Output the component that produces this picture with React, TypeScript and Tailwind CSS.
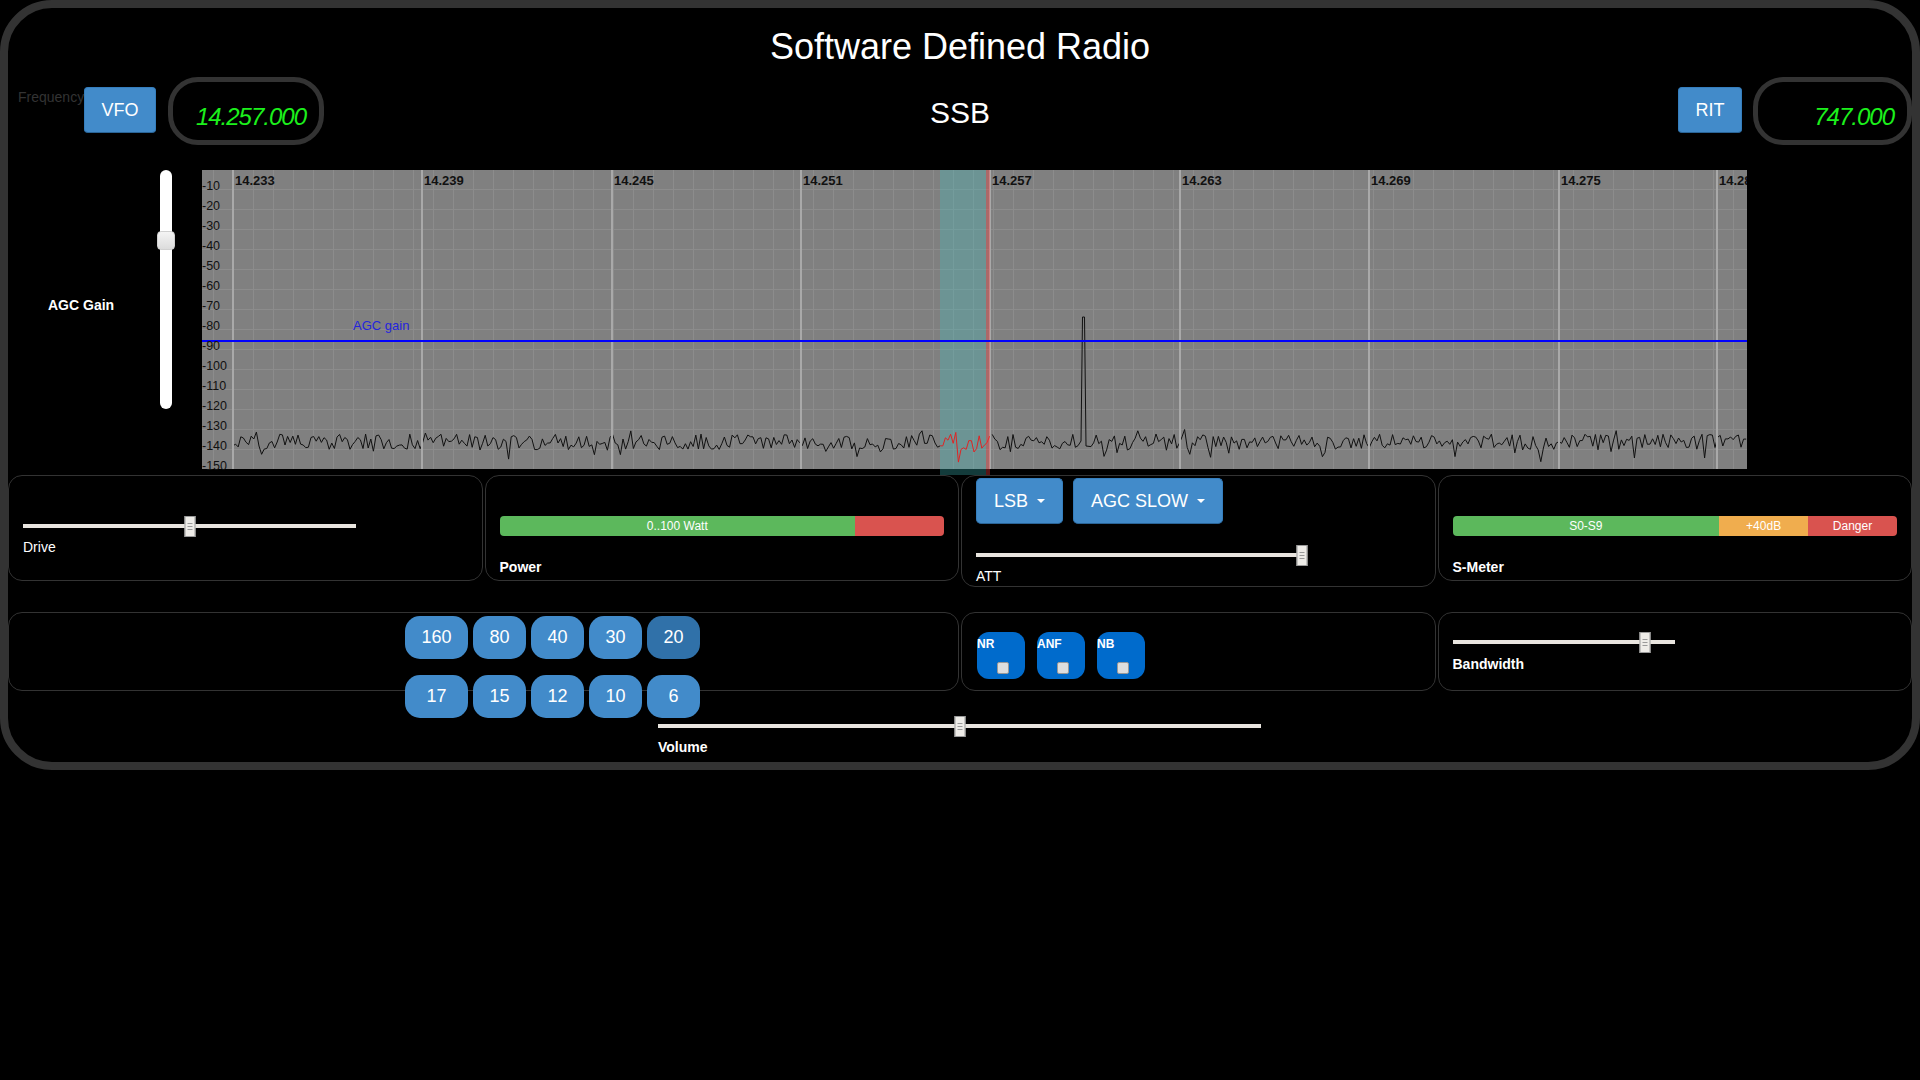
import React from "react";

const MAJORS = [31, 220, 410, 599, 788, 978, 1167, 1357, 1515];
const FREQS = ["14.233", "14.239", "14.245", "14.251", "14.257", "14.263", "14.269", "14.275", "14.281"];
const DB = [-10, -20, -30, -40, -50, -60, -70, -80, -90, -100, -110, -120, -130, -140, -150];

const SW = 1545;
const SH = 299;
const PB_LEFT = 738;
const PB_RIGHT = 789;

function makeTrace() {
  let s = 987654;
  const rnd = () => {
    s = (s * 16807) % 2147483647;
    return s / 2147483647;
  };
  const pts: [number, number][] = [];
  let spikeDone = false;
  for (let i = 0; i < 600; i++) {
    const x = 31 + i * 2.6;
    if (x > SW) break;
    if (x > 876 && x < 887) {
      if (!spikeDone) {
        pts.push([879, 271], [880.5, 147], [882.5, 147], [884, 276]);
        spikeDone = true;
      }
      continue;
    }
    let y = 272 + (rnd() - 0.5) * 16;
    if (rnd() < 0.07) y += 5 + rnd() * 8;
    if (rnd() < 0.05) y -= 4 + rnd() * 5;
    pts.push([x, y]);
  }
  return pts;
}

const TRACE = makeTrace();
const toPoints = (pts: [number, number][]) => pts.map(([x, y]) => `${x.toFixed(1)},${y.toFixed(1)}`).join(" ");
const BLACK_A = TRACE.filter(([x]) => x <= PB_LEFT + 1);
const RED = TRACE.filter(([x]) => x >= PB_LEFT - 1 && x <= PB_RIGHT + 1);
const BLACK_B = TRACE.filter(([x]) => x >= PB_RIGHT - 1);

function Spectrum() {
  const minorX: number[] = [];
  for (let x = 11; x < SW; x += 20) minorX.push(x);
  const minorY: number[] = [];
  for (let y = 19; y < SH; y += 20) minorY.push(y);

  return (
    <svg width={SW} height={305} className="block shrink-0">
      <rect x={0} y={0} width={SW} height={SH} fill="#808080" />
      {minorX.map((x) => (
        <line key={"mx" + x} x1={x + 0.5} y1={0} x2={x + 0.5} y2={SH} stroke="#8c8c8c" strokeWidth={1} />
      ))}
      {minorY.map((y) => (
        <line key={"my" + y} x1={0} y1={y + 0.5} x2={SW} y2={y + 0.5} stroke="#8c8c8c" strokeWidth={1} />
      ))}
      <polyline points={toPoints(BLACK_A)} fill="none" stroke="#111" strokeWidth={1} />
      <polyline points={toPoints(BLACK_B)} fill="none" stroke="#111" strokeWidth={1} />
      {MAJORS.map((x) => (
        <line key={"M" + x} x1={x} y1={0} x2={x} y2={SH} stroke="#a9a9a9" strokeWidth={2} />
      ))}
      <rect x={PB_LEFT} y={0} width={PB_RIGHT - PB_LEFT - 5} height={305} fill="#3ec4c4" opacity={0.3} />
      <polyline points={toPoints(RED)} fill="none" stroke="#e02424" strokeWidth={1} />
      <rect x={784} y={0} width={4} height={305} fill="#ff3c3c" opacity={0.35} />
      <line x1={0} y1={171} x2={SW} y2={171} stroke="#0000ff" strokeWidth={2} />
      <text x={151} y={160} fill="#2424dd" fontSize={13} fontFamily="Liberation Sans, Arial, sans-serif">
        AGC gain
      </text>
      {FREQS.map((f, i) => (
        <text
          key={f}
          x={MAJORS[i] + 2}
          y={15}
          fill="#111"
          fontSize={13}
          fontWeight="bold"
          fontFamily="Liberation Sans, Arial, sans-serif"
        >
          {f}
        </text>
      ))}
      {DB.map((d, i) => (
        <text key={d} x={0} y={19.5 + i * 20} fill="#111" fontSize={12.5} fontFamily="Liberation Sans, Arial, sans-serif">
          {d}
        </text>
      ))}
    </svg>
  );
}

function HSlider({ className, pos }: { className: string; pos: number }) {
  return (
    <div className={"relative h-[21px] " + className}>
      <div className="absolute left-0 right-0 top-[8px] h-[4px] bg-[#e9e5df]" />
      <div
        className="absolute top-0 flex h-[21px] w-[11px] -translate-x-1/2 flex-col items-center justify-center gap-[2px] border border-[#9a9a9a] bg-[#eeece8]"
        style={{ left: `${pos}%` }}
      >
        <span className="block h-px w-[5px] bg-[#9a9a9a]" />
        <span className="block h-px w-[5px] bg-[#9a9a9a]" />
        <span className="block h-px w-[5px] bg-[#9a9a9a]" />
      </div>
    </div>
  );
}

function Display({ value, wide }: { value: string; wide?: boolean }) {
  return (
    <div
      className={
        "flex h-[68px] items-start justify-end rounded-[30px] border-[5px] border-[#333] pr-[13px] pt-[21px] " +
        (wide ? "w-[159px]" : "w-[156px]")
      }
    >
      <span className="text-[24px] leading-[28px] italic tracking-[-1px] text-[#1cf01c]">{value}</span>
    </div>
  );
}

function BlueButton({ children, className }: { children: React.ReactNode; className: string }) {
  return (
    <button
      className={
        "flex items-center justify-center rounded-[4px] border border-[#357ebd] border-b-[#2a6496] bg-[#428bca] text-[18px] text-white " +
        className
      }
    >
      {children}
    </button>
  );
}

function Caret() {
  return <span className="ml-[9px] inline-block h-0 w-0 border-x-[4px] border-t-[4px] border-x-transparent border-t-white" />;
}

function Panel({ children, className }: { children: React.ReactNode; className: string }) {
  return <div className={"rounded-[14px] border border-[#333] px-[14px] " + className}>{children}</div>;
}

function Bar({ parts }: { parts: { w: string; bg: string; label?: string }[] }) {
  return (
    <div className="flex h-[20px] w-full overflow-hidden rounded-[4px]">
      {parts.map((p, i) => (
        <div key={i} className={"flex h-full items-center justify-center text-[12px] text-white " + p.w + " " + p.bg}>
          {p.label}
        </div>
      ))}
    </div>
  );
}

function BandButton({ label, wide, active }: { label: string; wide?: boolean; active?: boolean }) {
  return (
    <button
      className={
        "flex h-[43px] items-center justify-center rounded-[15px] text-[18px] text-white " +
        (wide ? "w-[63px] " : "w-[53px] ") +
        (active ? "bg-[#3071a9]" : "bg-[#428bca]")
      }
    >
      {label}
    </button>
  );
}

function ToggleButton({ label }: { label: string }) {
  return (
    <div className="flex h-[47px] w-[48px] flex-col rounded-[12px] bg-[#006bcc] pt-[6px]">
      <span className="text-[12px] font-bold leading-[12px] text-white">{label}</span>
      <span className="ml-[20px] mt-[12px] block h-[12px] w-[12px] rounded-[2px] border border-[#999] bg-[#dedede]" />
    </div>
  );
}

export default function App() {
  return (
    <div className="min-h-[1080px] w-[1920px] bg-black font-['Liberation_Sans',Arial,sans-serif] text-white">
      <div className="h-[770px] w-[1920px] rounded-[52px] border-[8px] border-[#333]">
        <div className="pt-[18px] text-center text-[36px] leading-[42px]">Software Defined Radio</div>

        <div className="mt-[9px] grid h-[68px] grid-cols-[1fr_auto_1fr] items-start">
          <div className="flex items-start">
            <div className="ml-[10px] w-[66px] whitespace-nowrap pt-[12px] text-[14px] leading-[16px] text-[#333]">
              Frequency
            </div>
            <BlueButton className="mt-[10px] h-[46px] w-[72px]">VFO</BlueButton>
            <div className="ml-[12px]">
              <Display value="14.257.000" />
            </div>
          </div>
          <div className="pt-[19px] text-[30px] leading-[34px]">SSB</div>
          <div className="flex items-start justify-end">
            <BlueButton className="mt-[10px] h-[46px] w-[64px]">RIT</BlueButton>
            <div className="ml-[11px]">
              <Display value="747.000" wide />
            </div>
          </div>
        </div>

        <div className="mt-[25px] flex h-[305px]">
          <div className="flex w-[194px]">
            <div className="w-[149px] pl-[40px] pt-[127px] text-[14px] font-bold leading-[16px]">AGC Gain</div>
            <div className="relative h-[239px] w-[18px]">
              <div className="absolute bottom-0 left-[3px] top-0 w-[12px] rounded-full bg-white" />
              <div className="absolute left-0 top-[61px] h-[19px] w-[18px] rounded-[4px] border border-[#d0d0d0] bg-gradient-to-b from-[#f4f4f4] to-[#dcdcdc]" />
            </div>
          </div>
          <Spectrum />
        </div>

        <div className="grid grid-cols-4 items-start gap-x-[2px]">
          <Panel className="h-[106px] pt-[40px]">
            <HSlider className="w-[333px]" pos={50} />
            <div className="mt-[2px] text-[14px] leading-[16px]">Drive</div>
          </Panel>
          <Panel className="h-[106px] pt-[40px]">
            <Bar
              parts={[
                { w: "w-[80%]", bg: "bg-[#5cb85c]", label: "0..100 Watt" },
                { w: "w-[20%]", bg: "bg-[#d9534f]" },
              ]}
            />
            <div className="mt-[23px] text-[14px] font-bold leading-[16px]">Power</div>
          </Panel>
          <Panel className="h-[112px] pt-[2px]">
            <div className="flex gap-[10px]">
              <BlueButton className="h-[46px] w-[87px] rounded-[5px]">
                LSB
                <Caret />
              </BlueButton>
              <BlueButton className="h-[46px] w-[150px] rounded-[5px]">
                AGC SLOW
                <Caret />
              </BlueButton>
            </div>
            <HSlider className="mt-[21px] w-[329px]" pos={99} />
            <div className="mt-[2px] text-[14px] leading-[16px]">ATT</div>
          </Panel>
          <Panel className="h-[106px] pt-[40px]">
            <Bar
              parts={[
                { w: "w-[60%]", bg: "bg-[#5cb85c]", label: "S0-S9" },
                { w: "w-[20%]", bg: "bg-[#f0ad4e]", label: "+40dB" },
                { w: "w-[20%]", bg: "bg-[#d9534f]", label: "Danger" },
              ]}
            />
            <div className="mt-[23px] text-[14px] font-bold leading-[16px]">S-Meter</div>
          </Panel>
        </div>

        <div className="mt-[25px] grid grid-cols-4 items-start gap-x-[2px]">
          <div className="col-span-2 h-[79px] rounded-[14px] border border-[#333] pl-[396px] pt-[3px]">
            <div className="flex flex-col gap-[16px]">
              <div className="flex gap-[5px]">
                <BandButton label="160" wide />
                <BandButton label="80" />
                <BandButton label="40" />
                <BandButton label="30" />
                <BandButton label="20" active />
              </div>
              <div className="flex gap-[5px]">
                <BandButton label="17" wide />
                <BandButton label="15" />
                <BandButton label="12" />
                <BandButton label="10" />
                <BandButton label="6" />
              </div>
            </div>
          </div>
          <Panel className="h-[79px] pt-[19px]">
            <div className="flex gap-[12px] pl-[1px]">
              <ToggleButton label="NR" />
              <ToggleButton label="ANF" />
              <ToggleButton label="NB" />
            </div>
          </Panel>
          <Panel className="h-[79px] pt-[19px]">
            <HSlider className="w-[222px]" pos={86.7} />
            <div className="mt-[3px] text-[14px] font-bold leading-[16px]">Bandwidth</div>
          </Panel>
        </div>

        <div className="ml-[650px] mt-[25px]">
          <HSlider className="w-[603px]" pos={50} />
          <div className="mt-[2px] text-[14px] font-bold leading-[16px]">Volume</div>
        </div>
      </div>
    </div>
  );
}
